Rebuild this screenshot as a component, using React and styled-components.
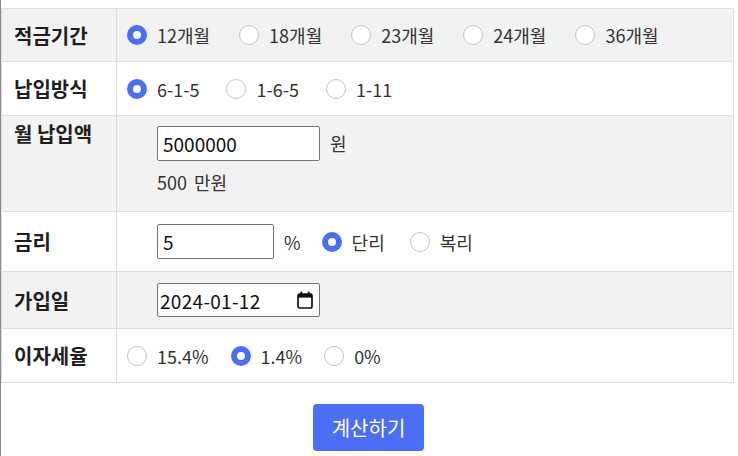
import React, { useState } from "react";
import styled, { createGlobalStyle } from "styled-components";

const GlobalStyle = createGlobalStyle`
  html, body {
    margin: 0;
    padding: 0;
    background: #fff;
  }
  body {
    font-family: "Noto Sans CJK KR", "Noto Sans", sans-serif;
    color: #222;
  }
`;

const Page = styled.div`
  border-left: 1px solid #8a8a8a;
  min-height: 456px;
  box-sizing: border-box;
  padding-top: 8px;
`;

const Table = styled.table`
  width: 733px;
  border-collapse: collapse;
  border: 1px solid #dedede;
`;

const Row = styled.tr`
  background: ${(p) => (p.$shade ? "#f2f2f2" : "#fff")};
`;

const Label = styled.th`
  width: 90px;
  padding: 0 12px;
  height: ${(p) => p.$h}px;
  border: 1px solid #dedede;
  text-align: left;
  vertical-align: ${(p) => (p.$top ? "top" : "middle")};
  padding-top: ${(p) => (p.$top ? "3px" : "0")};
  font-size: 20px;
  font-weight: 700;
  color: #1e1e1e;
  white-space: nowrap;
`;

const Cell = styled.td`
  border: 1px solid #dedede;
  padding: 0 10px;
  padding-left: ${(p) => (p.$indent ? "40px" : "10px")};
  vertical-align: middle;
`;

const Options = styled.div`
  display: flex;
  align-items: center;
  gap: ${(p) => p.$gap || 20}px;
`;

const Choice = styled.label`
  display: inline-flex;
  align-items: center;
  gap: 10px;
  font-size: 18px;
  color: #333;
  cursor: pointer;
`;

const Radio = styled.input.attrs({ type: "radio" })`
  appearance: none;
  margin: 0;
  width: 20px;
  height: 20px;
  border-radius: 50%;
  box-sizing: border-box;
  border: 1px solid #c4c4c4;
  background: #fff;
  &:checked {
    border: 6px solid #4b6ef5;
  }
`;

const Field = styled.input`
  box-sizing: border-box;
  height: 35px;
  width: ${(p) => p.$w}px;
  border: 1px solid #767676;
  border-radius: 2px;
  padding: 0 5px;
  font-family: "Noto Sans CJK KR", "Noto Sans", sans-serif;
  font-size: 19px;
  color: #111;
  background: #fff;
`;

const DateBox = styled.div`
  box-sizing: border-box;
  width: 163px;
  height: 34px;
  display: flex;
  align-items: center;
  border: 1px solid #767676;
  border-radius: 2px;
  background: #fff;
  padding: 0 6px 0 2px;
`;

const DateText = styled.input`
  flex: 1;
  min-width: 0;
  border: none;
  outline: none;
  padding: 0;
  background: transparent;
  font-family: "Noto Sans CJK KR", "Noto Sans", sans-serif;
  font-size: 19px;
  letter-spacing: 0.3px;
  color: #111;
`;

const InlineGroup = styled.div`
  display: flex;
  align-items: center;
  gap: 10px;
`;

const Unit = styled.span`
  font-size: 18px;
  color: #333;
  margin-right: ${(p) => p.$after || 0}px;
`;

const Stack = styled.div`
  display: flex;
  flex-direction: column;
  gap: 9px;
  padding: 8px 0 15px;
`;

const Hint = styled.div`
  font-size: 18px;
  line-height: 25px;
  color: #333;
  word-spacing: 3px;
`;

const Footer = styled.div`
  width: 735px;
  display: flex;
  justify-content: center;
  padding-top: 21px;
`;

const Button = styled.button`
  width: 111px;
  height: 47px;
  border: none;
  border-radius: 4px;
  background: #4b6ef5;
  color: #fff;
  font-family: "Noto Sans CJK KR", "Noto Sans", sans-serif;
  font-size: 20px;
  cursor: pointer;
`;

const PERIODS = ["12개월", "18개월", "23개월", "24개월", "36개월"];
const METHODS = ["6-1-5", "1-6-5", "1-11"];
const TAXES = ["15.4%", "1.4%", "0%"];

function CalendarIcon() {
  return (
    <svg width="16" height="18" viewBox="0 0 16 18">
      <rect
        x="1"
        y="3"
        width="14"
        height="14"
        rx="1.8"
        fill="none"
        stroke="#111"
        strokeWidth="1.7"
      />
      <rect x="1" y="3" width="14" height="3.6" fill="#111" />
      <rect x="3.4" y="0.6" width="1.9" height="4" fill="#111" />
      <rect x="10.7" y="0.6" width="1.9" height="4" fill="#111" />
    </svg>
  );
}

function RadioGroup({ name, items, value, onChange, gap }) {
  return (
    <Options $gap={gap}>
      {items.map((item) => (
        <Choice key={item}>
          <Radio
            name={name}
            checked={value === item}
            onChange={() => onChange(item)}
          />
          {item}
        </Choice>
      ))}
    </Options>
  );
}

export default function App() {
  const [period, setPeriod] = useState("12개월");
  const [method, setMethod] = useState("6-1-5");
  const [amount, setAmount] = useState("5000000");
  const [rate, setRate] = useState("5");
  const [kind, setKind] = useState("단리");
  const [date, setDate] = useState("2024-01-12");
  const [tax, setTax] = useState("1.4%");

  return (
    <Page>
      <GlobalStyle />
      <Table>
        <tbody>
          <Row $shade>
            <Label $h={52}>적금기간</Label>
            <Cell>
              <RadioGroup
                name="period"
                items={PERIODS}
                value={period}
                onChange={setPeriod}
                gap={29}
              />
            </Cell>
          </Row>
          <Row>
            <Label $h={53}>납입방식</Label>
            <Cell>
              <RadioGroup
                name="method"
                items={METHODS}
                value={method}
                onChange={setMethod}
                gap={27}
              />
            </Cell>
          </Row>
          <Row $shade>
            <Label $top $h={92}>
              월 납입액
            </Label>
            <Cell $indent>
              <Stack>
                <InlineGroup>
                  <Field
                    $w={163}
                    value={amount}
                    onChange={(e) => setAmount(e.target.value)}
                  />
                  <Unit>원</Unit>
                </InlineGroup>
                <Hint>{Math.floor(Number(amount) / 10000)} 만원</Hint>
              </Stack>
            </Cell>
          </Row>
          <Row>
            <Label $h={59}>금리</Label>
            <Cell $indent>
              <InlineGroup>
                <Field
                  $w={117}
                  value={rate}
                  onChange={(e) => setRate(e.target.value)}
                />
                <Unit $after={11}>%</Unit>
                <RadioGroup
                  name="kind"
                  items={["단리", "복리"]}
                  value={kind}
                  onChange={setKind}
                  gap={25}
                />
              </InlineGroup>
            </Cell>
          </Row>
          <Row $shade>
            <Label $h={56}>가입일</Label>
            <Cell $indent>
              <DateBox>
                <DateText
                  value={date}
                  onChange={(e) => setDate(e.target.value)}
                />
                <CalendarIcon />
              </DateBox>
            </Cell>
          </Row>
          <Row>
            <Label $h={53}>이자세율</Label>
            <Cell>
              <RadioGroup
                name="tax"
                items={TAXES}
                value={tax}
                onChange={setTax}
                gap={22}
              />
            </Cell>
          </Row>
        </tbody>
      </Table>
      <Footer>
        <Button>계산하기</Button>
      </Footer>
    </Page>
  );
}
